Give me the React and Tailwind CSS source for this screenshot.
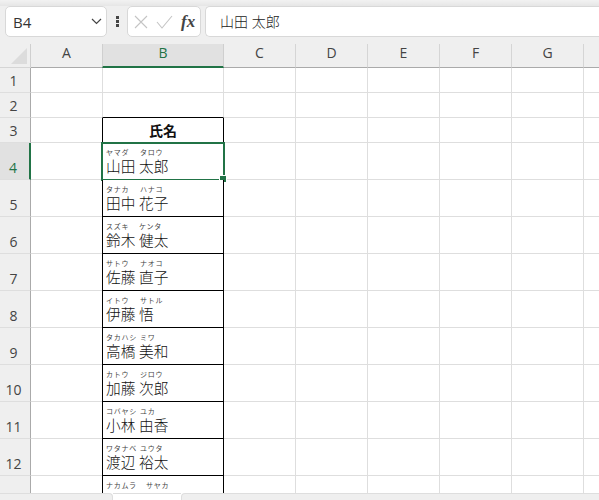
const F = '[font-family:"Open_Sans","Noto_Sans_CJK_JP",sans-serif]';
const cols = ["C", "D", "E", "F", "G"];
const rows = [
  ["ヤマダ", "タロウ", 34, "山田 太郎"],
  ["タナカ", "ハナコ", 34, "田中 花子"],
  ["スズキ", "ケンタ", 33, "鈴木 健太"],
  ["サトウ", "ナオコ", 34, "佐藤 直子"],
  ["イトウ", "サトル", 34, "伊藤 悟"],
  ["タカハシ", "ミワ", 34, "高橋 美和"],
  ["カトウ", "ジロウ", 34, "加藤 次郎"],
  ["コバヤシ", "ユカ", 34, "小林 由香"],
  ["ワタナベ", "ユウタ", 34, "渡辺 裕太"],
  ["ナカムラ", "サヤカ", 40, ""],
];

function Blank({ last }) {
  return <div className={`bg-white ${last ? "" : "border-b border-[#dedede]"}`} />;
}

function Right({ last }) {
  return (
    <>
      {cols.map((c) => (
        <div key={c} className={`bg-white border-r border-[#dedede] ${last ? "" : "border-b"}`} />
      ))}
      <div className={`bg-white ${last ? "" : "border-b border-[#dedede]"}`} />
    </>
  );
}

function RowHead({ label, active, tall, last }) {
  return (
    <div
      className={`flex items-center justify-center text-[14px] pr-[3px] ${last ? "" : "border-b border-[#dedede]"} ${
        tall ? "pt-[12px]" : "pt-px"
      } ${
        active
          ? "bg-[#e1e1e1] text-[#217346] border-r-2 border-r-[#217346]"
          : "bg-[#efefef] text-[#444] border-r border-r-[#aaaaaa]"
      }`}
    >
      {label}
    </div>
  );
}

function NameCell({ r, active, last }) {
  return (
    <div
      className={`relative bg-white border-x border-black pl-[3px] pt-[5px] ${last ? "overflow-hidden" : "border-b"}`}
    >
      <div className="flex h-[8px] text-[7px] leading-[9px] tracking-[0.75px] text-[#444]">
        <span style={{ width: r[2] }}>{r[0]}</span>
        <span>{r[1]}</span>
      </div>
      {r[3] && <div className="text-[14.67px] font-light leading-[20px] text-[#111] whitespace-nowrap">{r[3]}</div>}
      {active && (
        <>
          <div className="absolute -left-[2px] -right-[2px] -top-[1px] -bottom-[2px] border-2 border-[#217346]" />
          <div className="absolute -right-[3px] -bottom-[3px] w-[6px] h-[6px] bg-[#217346] outline outline-1 outline-white" />
        </>
      )}
    </div>
  );
}

export default function App() {
  return (
    <div className={`${F} w-[599px] h-[500px] overflow-hidden bg-white flex flex-col`}>
      <div className="h-[44px] shrink-0 bg-[#efefef]">
        <div className="h-[6px] bg-gradient-to-b from-[#f2f2f2] to-[#e6e6e6]" />
        <div className="flex items-stretch h-[31px] pl-[5px]">
          <div className="w-[102px] bg-white border border-[#d8d8d8] rounded-[5px] flex items-center pl-[7px] pr-[4px] text-[15px] text-[#333]">
            <span className="flex-1 pt-px">B4</span>
            <svg width="11" height="7" viewBox="0 0 11 7" fill="none" stroke="#444" strokeWidth="1.2">
              <path d="M1 1l4.5 4.5L10 1" />
            </svg>
          </div>
          <div className="w-[20px] flex flex-col items-center justify-center gap-[1px]">
            <i className="block w-[3px] h-[3px] bg-[#444]" />
            <i className="block w-[3px] h-[3px] bg-[#444]" />
            <i className="block w-[3px] h-[3px] bg-[#444]" />
          </div>
          <div className="w-[74px] bg-white border border-[#d8d8d8] rounded-[5px] flex items-center pl-[6px]">
            <svg width="14" height="14" viewBox="0 0 14 14" fill="none" stroke="#c4c4c4" strokeWidth="1.1">
              <path d="M1 1l12 12M13 1L1 13" />
            </svg>
            <svg className="ml-[8px]" width="17" height="14" viewBox="0 0 17 14" fill="none" stroke="#c4c4c4" strokeWidth="1.1">
              <path d="M1 7l5 6L16 1" />
            </svg>
            <span className="ml-[8px] [font-family:'Liberation_Serif',serif] italic font-bold text-[17px] leading-none text-[#444]">fx</span>
          </div>
          <div className="ml-[4px] flex-1 bg-white border border-[#d8d8d8] border-r-0 rounded-l-[5px] flex items-center pl-[14px] text-[14px] font-light text-[#222]">
            山田 太郎
          </div>
        </div>
      </div>

      <div className="h-[449px] shrink-0 grid grid-cols-[31px_71px_122px_72px_72px_72px_72px_72px_15px] grid-rows-[24px_25px_25px_25px_37px_37px_37px_37px_37px_37px_37px_37px_37px_17px]">
        <div className="flex items-end justify-end pr-[3px] pb-[3px] bg-[#efefef] border-r border-r-[#cfcfcf] border-b border-b-[#d5d5d5]">
          <svg width="16" height="16" viewBox="0 0 16 16">
            <polygon points="0,16 16,0 16,16" fill="#dcdcdc" />
          </svg>
        </div>
        <div className="bg-[#efefef] border-b border-[#aaaaaa] text-[14px] text-[#444] flex items-center justify-center pb-[7px]">A</div>
        <div className="bg-[#e1e1e1] border-b-2 border-[#217346] border-x border-x-[#cfcfcf] text-[14px] text-[#217346] flex items-center justify-center pb-[6px]">B</div>
        {cols.map((c) => (
          <div key={c} className="bg-[#efefef] border-b border-[#aaaaaa] border-r border-r-[#d5d5d5] text-[14px] text-[#444] flex items-center justify-center pb-[7px]">{c}</div>
        ))}
        <div className="bg-[#efefef] border-b border-[#aaaaaa]" />

        <RowHead label="1" />
        <Blank />
        <div className="bg-white border-x border-b border-[#dedede]" />
        <Right />

        <RowHead label="2" />
        <Blank />
        <div className="bg-white border-x border-[#dedede] border-b border-b-black" />
        <Right />

        <RowHead label="3" />
        <Blank />
        <div className="bg-white border-x border-b border-black flex items-center justify-center font-bold text-[14px] text-[#111]">氏名</div>
        <Right />

        {rows.map((r, i) => {
          const last = i === rows.length - 1;
          return (
            <div key={r[0] + r[1]} className="contents">
              <RowHead label={last ? "" : String(i + 4)} active={i === 0} tall last={last} />
              <Blank last={last} />
              <NameCell r={r} active={i === 0} last={last} />
              <Right last={last} />
            </div>
          );
        })}
      </div>

      <div className="h-[7px] shrink-0 flex bg-white">
        <div className="w-[113px] rounded-tr-[4px] bg-[#efefef] border-t border-r border-[#dedede]" />
        <div className="w-[68px] border-t border-[#dedede]" />
        <div className="flex-1 rounded-tl-[4px] bg-[#efefef] border-t border-l border-[#dedede]" />
      </div>
    </div>
  );
}
